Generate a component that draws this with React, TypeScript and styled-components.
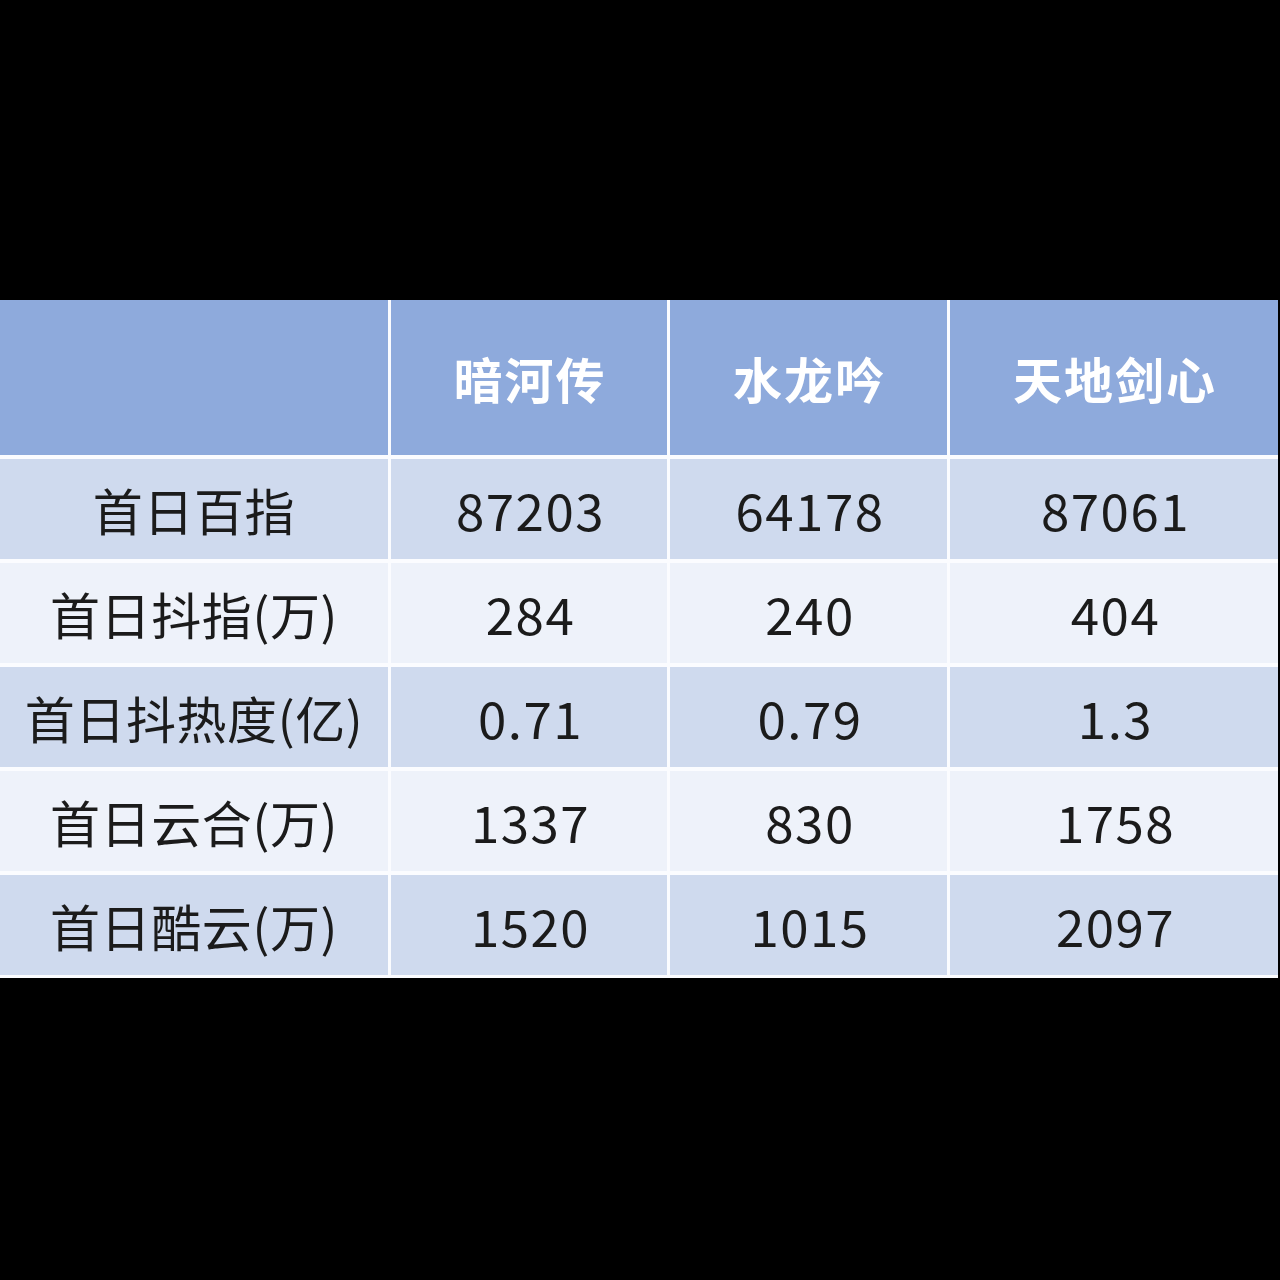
import React from "react";
import styled, { createGlobalStyle } from "styled-components";

const Global = createGlobalStyle`
  html, body { margin: 0; padding: 0; background: #000; }
  body { width: 1280px; height: 1280px; overflow: hidden; }
`;

const Page = styled.div`
  width: 1280px;
  height: 1280px;
  background: #000;
  padding-top: 300px;
  box-sizing: border-box;
`;

const Table = styled.div`
  width: 1278px;
  display: grid;
  grid-template-columns: 388px 276px 277px 328px;
  grid-template-rows: 155px repeat(5, 100px);
  column-gap: 3px;
  row-gap: 4px;
  background: #fbfcff;
  padding-bottom: 3px;
  font-family: "Noto Sans CJK SC", "Noto Sans", sans-serif;
`;

const HeadCell = styled.div`
  background: #8eaadc;
  color: #ffffff;
  font-weight: 700;
  font-size: 49px;
  display: flex;
  align-items: center;
  justify-content: center;
  letter-spacing: 2px;
  padding-left: 2px;
`;

const Cell = styled.div<{ $band: boolean; $label?: boolean }>`
  background: ${(p) => (p.$band ? "#cfdaee" : "#eef2fa")};
  color: #1b1b1b;
  font-size: ${(p) => (p.$label ? "50px" : "51px")};
  letter-spacing: ${(p) => (p.$label ? "0.6px" : "1.5px")};
  padding-left: ${(p) => (p.$label ? "0" : "3px")};
  display: flex;
  align-items: center;
  justify-content: center;
  white-space: nowrap;
`;

const rows: [string, string, string, string][] = [
  ["首日百指", "87203", "64178", "87061"],
  ["首日抖指(万)", "284", "240", "404"],
  ["首日抖热度(亿)", "0.71", "0.79", "1.3"],
  ["首日云合(万)", "1337", "830", "1758"],
  ["首日酷云(万)", "1520", "1015", "2097"],
];

export default function App() {
  return (
    <Page>
      <Global />
      <Table>
        <HeadCell />
        <HeadCell>暗河传</HeadCell>
        <HeadCell>水龙吟</HeadCell>
        <HeadCell>天地剑心</HeadCell>
        {rows.map((r, i) =>
          r.map((v, j) => (
            <Cell key={`${i}-${j}`} $band={i % 2 === 0} $label={j === 0}>
              {v}
            </Cell>
          ))
        )}
      </Table>
    </Page>
  );
}
